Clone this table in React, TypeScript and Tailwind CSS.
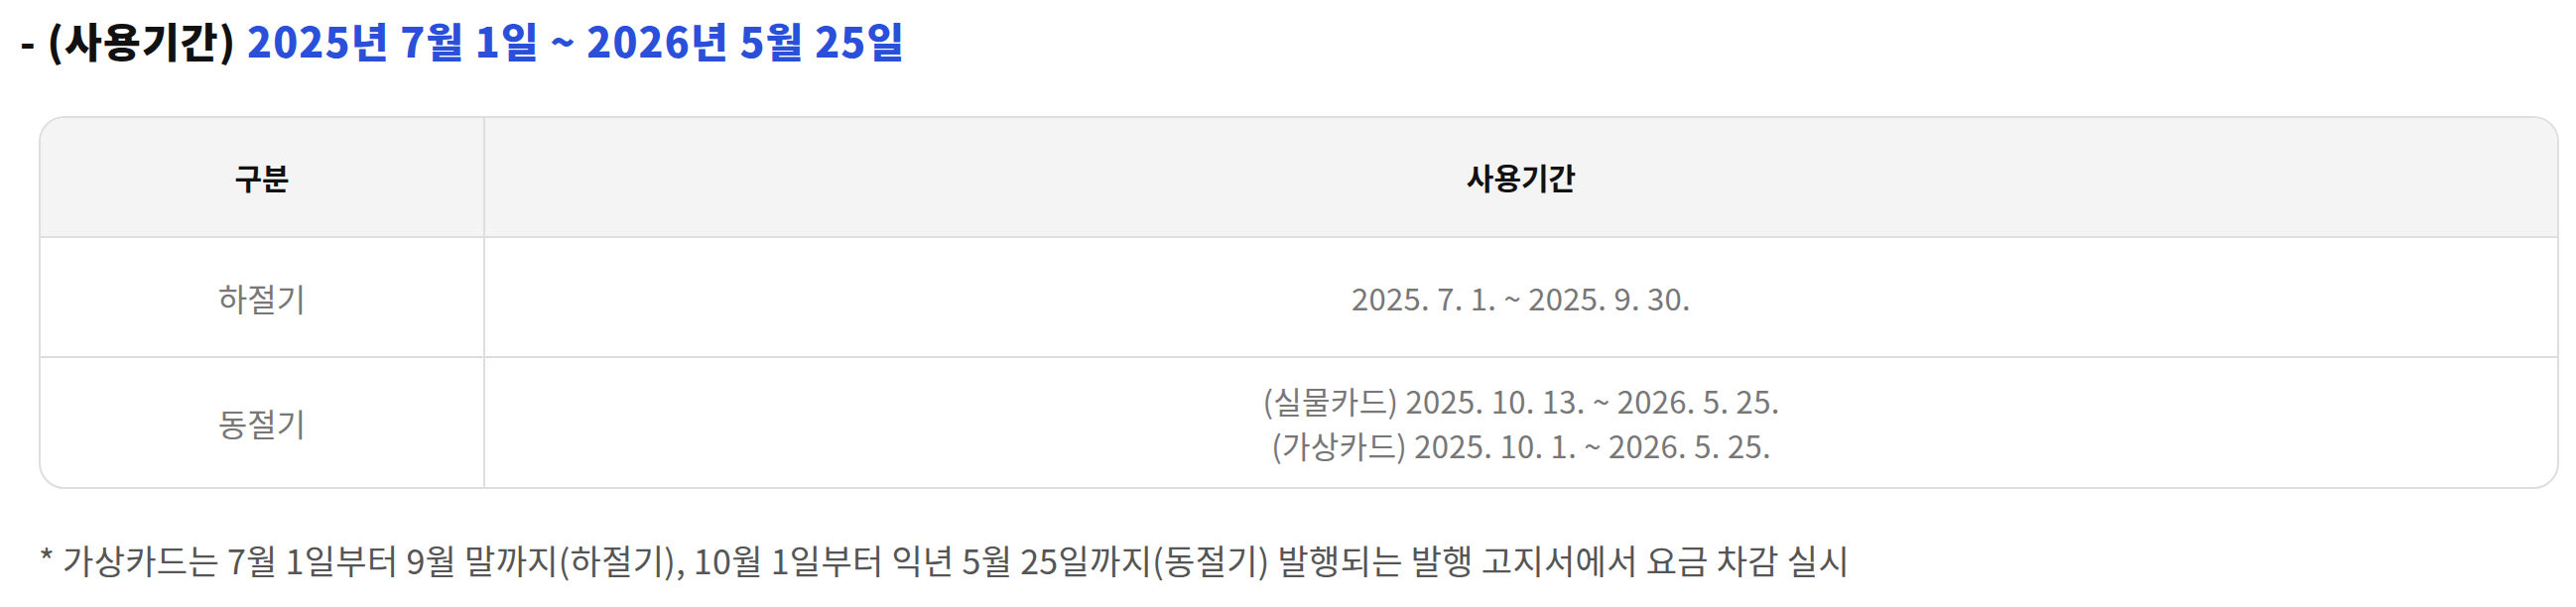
const rows = [
  { label: '하절기', periods: ['2025. 7. 1. ~ 2025. 9. 30.'] },
  {
    label: '동절기',
    periods: ['(실물카드) 2025. 10. 13. ~ 2026. 5. 25.', '(가상카드) 2025. 10. 1. ~ 2026. 5. 25.'],
  },
]

const App = () => {
  return (
    <div className="min-h-screen bg-white pl-[20px] pr-[17px] pt-[13px] font-['Noto_Sans_CJK_KR','Noto_Sans',sans-serif]">
      {/* 사용기간 제목 */}
      <h2 className="text-[41px] font-extrabold leading-[54px] tracking-[1.2px] text-[#111]">
        - (사용기간) <span className="text-[#2a4fd9]">2025년 7월 1일 ~ 2026년 5월 25일</span>
      </h2>

      {/* 기간 표 */}
      <div className="ml-[19px] mt-[50px] overflow-hidden rounded-[26px] border-2 border-[#dedede]">
        <div className="flex h-[119px] bg-[#f4f4f4] text-[30px] font-bold text-[#111]">
          <div className="flex w-[448px] shrink-0 items-center justify-center border-r-2 border-[#dedede]">구분</div>
          <div className="flex flex-1 items-center justify-center">사용기간</div>
        </div>
        {rows.map((row, i) => (
          <div
            key={row.label}
            className={
              'flex border-t-2 border-[#dedede] text-[#777] ' + (i === 0 ? 'h-[121px]' : 'h-[132px]')
            }
          >
            <div className="flex w-[448px] shrink-0 items-center justify-center border-r-2 border-[#dedede] text-[32px]">
              {row.label}
            </div>
            <div className="flex flex-1 flex-col items-center justify-center text-[31px] leading-[45px] tracking-[0.3px]">
              {row.periods.map((p) => (
                <p key={p}>{p}</p>
              ))}
            </div>
          </div>
        ))}
      </div>

      {/* 안내 문구 */}
      <p className="ml-[19px] mt-[49px] text-[34px] leading-[45px] tracking-[0.3px] text-[#555]">
        * 가상카드는 7월 1일부터 9월 말까지(하절기), 10월 1일부터 익년 5월 25일까지(동절기) 발행되는 발행 고지서에서 요금 차감 실시
      </p>
    </div>
  )
}

export default App
